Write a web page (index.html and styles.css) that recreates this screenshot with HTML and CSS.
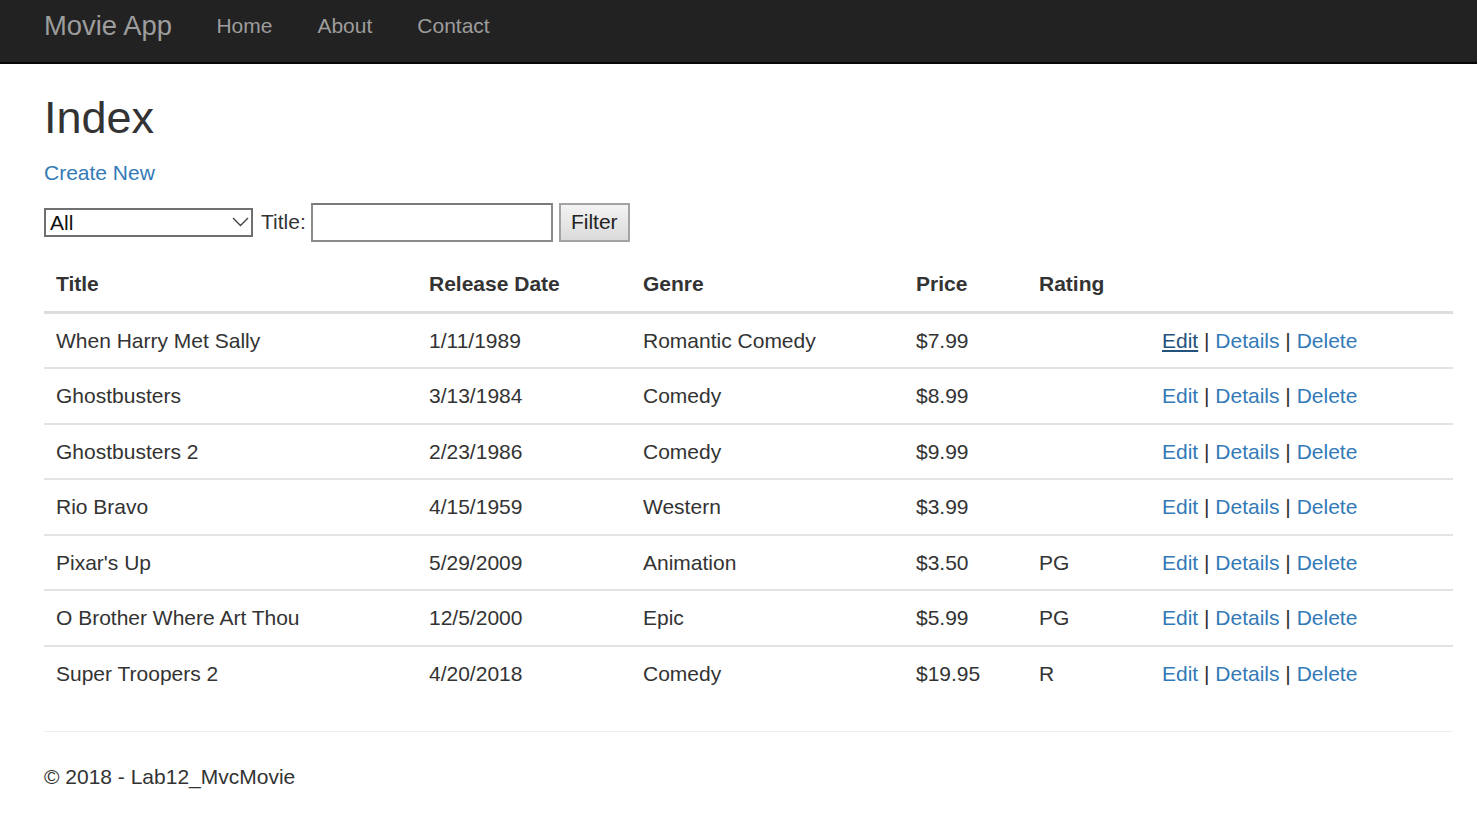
FILE: index.html
```html
<!DOCTYPE html>
<html lang="en">
<head>
<meta charset="utf-8">
<title>Index - Movie App</title>
<link rel="stylesheet" href="styles.css">
</head>
<body>
<nav class="navbar">
  <a class="brand" href="#">Movie App</a>
  <a class="nav-link" href="#">Home</a>
  <a class="nav-link" href="#">About</a>
  <a class="nav-link" href="#">Contact</a>
</nav>
<div class="content">
  <h2 class="page-title">Index</h2>
  <p class="create"><a href="#">Create New</a></p>
  <form class="filter">
    <div class="select-wrap">
      <select class="genre"><option>All</option></select>
      <svg class="chev" width="17" height="10" viewBox="0 0 17 10"><path d="M1 1 L8.5 8.5 L16 1" fill="none" stroke="#444" stroke-width="1.4"/></svg>
    </div>
    <label class="title-label">Title:</label>
    <input class="title-input" type="text">
    <button class="filter-btn" type="button">Filter</button>
  </form>
  <table class="movies">
    <thead>
      <tr>
        <th class="c-title">Title</th>
        <th class="c-date">Release Date</th>
        <th class="c-genre">Genre</th>
        <th class="c-price">Price</th>
        <th class="c-rating">Rating</th>
        <th class="c-actions"></th>
      </tr>
    </thead>
    <tbody>
      <tr><td>When Harry Met Sally</td><td>1/11/1989</td><td>Romantic Comedy</td><td>$7.99</td><td></td><td><a class="focused" href="#">Edit</a> | <a href="#">Details</a> | <a href="#">Delete</a></td></tr>
      <tr><td>Ghostbusters</td><td>3/13/1984</td><td>Comedy</td><td>$8.99</td><td></td><td><a href="#">Edit</a> | <a href="#">Details</a> | <a href="#">Delete</a></td></tr>
      <tr><td>Ghostbusters 2</td><td>2/23/1986</td><td>Comedy</td><td>$9.99</td><td></td><td><a href="#">Edit</a> | <a href="#">Details</a> | <a href="#">Delete</a></td></tr>
      <tr><td>Rio Bravo</td><td>4/15/1959</td><td>Western</td><td>$3.99</td><td></td><td><a href="#">Edit</a> | <a href="#">Details</a> | <a href="#">Delete</a></td></tr>
      <tr><td>Pixar's Up</td><td>5/29/2009</td><td>Animation</td><td>$3.50</td><td>PG</td><td><a href="#">Edit</a> | <a href="#">Details</a> | <a href="#">Delete</a></td></tr>
      <tr><td>O Brother Where Art Thou</td><td>12/5/2000</td><td>Epic</td><td>$5.99</td><td>PG</td><td><a href="#">Edit</a> | <a href="#">Details</a> | <a href="#">Delete</a></td></tr>
      <tr><td>Super Troopers 2</td><td>4/20/2018</td><td>Comedy</td><td>$19.95</td><td>R</td><td><a href="#">Edit</a> | <a href="#">Details</a> | <a href="#">Delete</a></td></tr>
    </tbody>
  </table>
  <hr class="rule">
  <footer class="footer">
    <p>&copy; 2018 - Lab12_MvcMovie</p>
  </footer>
</div>
</body>
</html>
```

FILE: styles.css
```css
* { box-sizing: border-box; }

html, body {
  margin: 0;
  padding: 0;
  background: #fff;
}

body {
  font-family: "Liberation Sans", Arial, Helvetica, sans-serif;
  font-size: 21px;
  line-height: 30px;
  color: #333;
}

a { color: #337ab7; text-decoration: none; }

.navbar {
  height: 64px;
  background: #222;
  border-bottom: 2px solid #080808;
  display: flex;
  align-items: flex-start;
  padding: 11px 0 0 44px;
}

.brand {
  font-size: 27.4px;
  line-height: 30px;
  color: #9d9d9d;
  padding-right: 22px;
}

.nav-link {
  font-size: 21px;
  line-height: 30px;
  color: #9d9d9d;
  padding: 0 22.5px;
}

.content {
  margin-left: 44px;
  width: 1409px;
}

.page-title {
  margin: 29px 0 15px;
  font-size: 45px;
  line-height: 49.5px;
  font-weight: 500;
  color: #333;
}

.create {
  margin: 0 0 15px;
}

.filter {
  display: flex;
  align-items: center;
  height: 39px;
  margin: 0 0 15px;
}

.select-wrap {
  position: relative;
  width: 209px;
  height: 29px;
}

.genre {
  appearance: none;
  -webkit-appearance: none;
  width: 209px;
  height: 29px;
  border: 2px solid #707070;
  border-radius: 0;
  background: #fff;
  font-family: "Liberation Sans", Arial, sans-serif;
  font-size: 21px;
  line-height: 25px;
  padding: 0 0 0 4px;
  color: #111;
  margin: 0;
}

.chev {
  position: absolute;
  right: 4px;
  top: 9px;
  pointer-events: none;
}

.title-label {
  margin-left: 8px;
  color: #333;
}

.title-input {
  margin: 0 0 0 5px;
  width: 242px;
  height: 39px;
  border: 2px solid #8a8a8a;
  border-top-color: #7a7a7a;
  background: #fff;
  padding: 0 4px;
  font-size: 21px;
}

.filter-btn {
  margin: 0 0 0 6px;
  width: 71px;
  height: 39px;
  border: 2px solid #a3a3a3;
  border-radius: 0;
  background: linear-gradient(#f3f3f3, #dadada);
  font-family: "Liberation Sans", Arial, sans-serif;
  font-size: 21px;
  color: #222;
  padding: 0;
}

.movies {
  width: 1409px;
  table-layout: fixed;
  border-collapse: collapse;
  border-spacing: 0;
  margin-bottom: 31px;
}

.movies th {
  text-align: left;
  font-weight: bold;
  padding: 12px;
  line-height: 30px;
  vertical-align: bottom;
  border-bottom: 3px solid #ddd;
}

.movies td {
  padding: 12px;
  line-height: 29.5px;
  border-top: 2px solid #e3e3e3;
  vertical-align: top;
  white-space: nowrap;
}

.c-title { width: 373px; }
.c-date { width: 214px; }
.c-genre { width: 273px; }
.c-price { width: 123px; }
.c-rating { width: 123px; }
.c-actions { width: 303px; }

.movies a.focused {
  color: #23527c;
  text-decoration: underline;
}

.rule {
  margin: 0;
  border: 0;
  border-top: 1px solid #eee;
}

.footer p {
  margin: 30px 0 0;
}
```
